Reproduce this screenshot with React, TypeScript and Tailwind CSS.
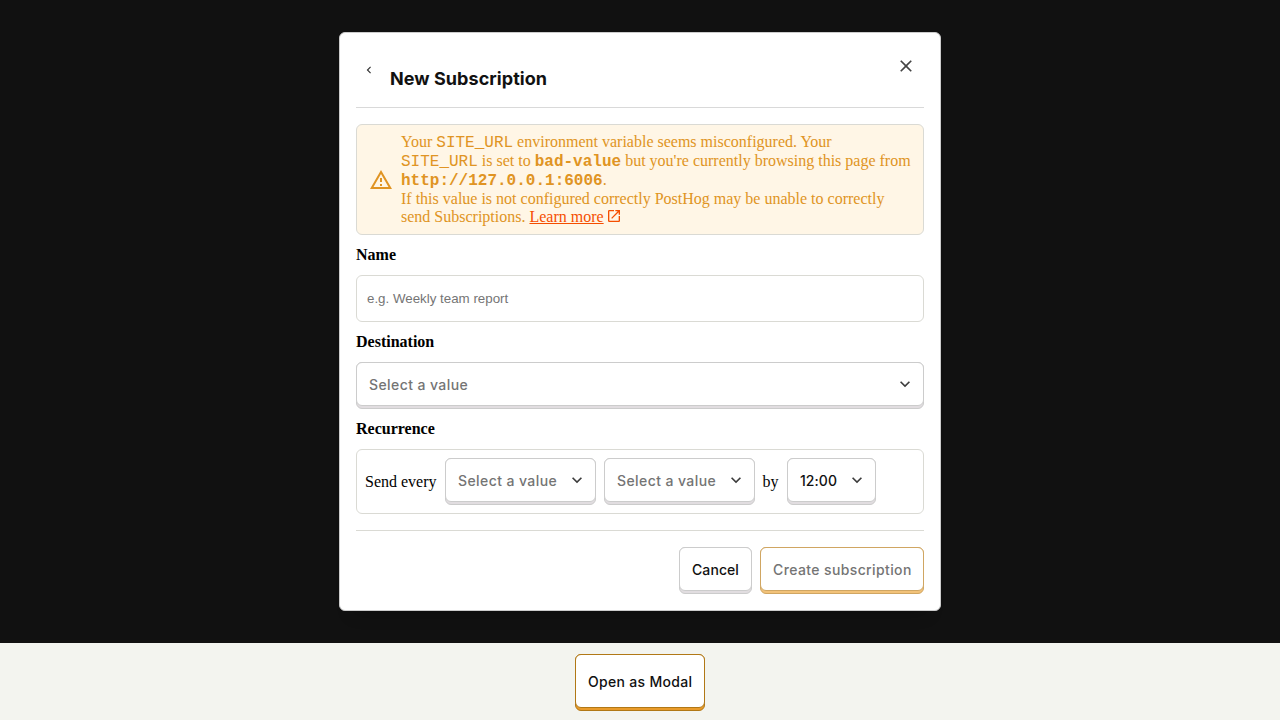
import type { ReactNode } from 'react'

const SERIF = "font-['Liberation_Serif',serif]"

interface LemonButtonProps {
  children: ReactNode
  className?: string
  frame?: string
  face?: string
  text?: string
  chevron?: boolean
}

function ChevronDown() {
  return (
    <svg viewBox="0 0 24 24" className="-mt-0.5 size-5 shrink-0 text-[#3c3c3c]" fill="currentColor">
      <path d="M7.41 8.59 12 13.17l4.59-4.58L18 10l-6 6-6-6z" />
    </svg>
  )
}

function LemonButton({
  children,
  className = 'h-[47px]',
  frame = 'border-[#cccccc] bg-[#e1dde0]',
  face = 'border-[#cccccc]',
  text = 'text-[#111]',
  chevron = false,
}: LemonButtonProps) {
  return (
    <button className={`flex rounded-md border pb-px ${frame} ${className}`}>
      <span
        className={`-mx-px -mt-px flex h-full flex-1 items-center justify-between rounded-md border bg-white pt-px pl-3 font-['Inter',sans-serif] text-sm font-medium whitespace-nowrap ${
          chevron ? 'pr-2' : 'pr-2.5'
        } ${face} ${text}`}
      >
        {children}
        {chevron && <ChevronDown />}
      </span>
    </button>
  )
}

function Field({ label, children }: { label: string; children: ReactNode }) {
  return (
    <div className="flex flex-col gap-2">
      <label className="h-6 text-base leading-6 font-bold">{label}</label>
      {children}
    </div>
  )
}

function Code({ children }: { children: ReactNode }) {
  return <code className="font-['Liberation_Mono',monospace] text-base leading-[normal]">{children}</code>
}

function Banner() {
  return (
    <div className="flex items-center rounded-md border border-[#dadad4] bg-[#fff6e6] py-2 pr-3 pl-3 text-[#e09423]">
      <svg viewBox="0 0 24 24" className="mr-2 size-6 shrink-0" fill="currentColor">
        <path d="M12 5.99 19.53 19H4.47L12 5.99M12 2 1 21h22L12 2zm1 14h-2v2h2v-2zm0-6h-2v4h2v-4z" />
      </svg>
      <div className="flex-1 text-base leading-[normal]">
        Your <Code>SITE_URL</Code> environment variable seems misconfigured. Your <Code>SITE_URL</Code> is set to{' '}
        <b><Code>bad-value</Code></b> but you're currently browsing this page from{' '}
        <b><Code>http://127.0.0.1:6006</Code></b>.
        <br />
        If this value is not configured correctly PostHog may be unable to correctly send Subscriptions.{' '}
        <a className="text-[#f54e00] underline">Learn more</a>
        <svg viewBox="0 0 24 24" className="ml-0.5 inline size-4 align-[-2px] text-[#f54e00]" fill="currentColor">
          <path d="M19 19H5V5h7V3H5a2 2 0 0 0-2 2v14a2 2 0 0 0 2 2h14c1.1 0 2-.9 2-2v-7h-2v7zM14 3v2h3.59l-9.83 9.83 1.41 1.41L19 6.41V10h2V3h-7z" />
        </svg>
      </div>
    </div>
  )
}

export default function App() {
  return (
    <div className={`flex h-[720px] w-[1280px] flex-col overflow-hidden bg-[#f3f4ef] text-base text-black ${SERIF}`}>
      <div className="flex h-[643px] items-start justify-center bg-[#111] pt-8">
        <section className="flex h-[579px] w-[602px] flex-col rounded-md border border-[#cccccc] bg-white px-4 shadow-[0_16px_16px_-16px_rgba(0,0,0,0.35)]">
          <header className="flex h-[75px] items-start border-b border-[#d9d9d9]">
            <svg viewBox="0 0 24 24" className="mt-[30px] ml-1.5 size-[14px] text-[#333]" fill="currentColor">
              <path d="M15.41 7.41 14 6l-6 6 6 6 1.41-1.41L10.83 12z" />
            </svg>
            <h3 className="mt-8 ml-[14px] font-['Inter',sans-serif] text-lg leading-7 font-bold tracking-[0.06px] text-[#111]">
              New Subscription
            </h3>
            <svg viewBox="0 0 24 24" className="mt-[23px] mr-2 ml-auto size-5 text-[#444]" fill="currentColor">
              <path d="M19 6.41 17.59 5 12 10.59 6.41 5 5 6.41 10.59 12 5 17.59 6.41 19 12 13.41 17.59 19 19 17.59 13.41 12z" />
            </svg>
          </header>

          <div className="flex flex-col gap-2 py-4">
            <Banner />
            <Field label="Name">
              <input
                placeholder="e.g. Weekly team report"
                className="h-[47px] rounded-md border border-[#dadad4] bg-white px-2.5 font-['Liberation_Sans',sans-serif] text-[13.333px] placeholder:text-[#757575]"
              />
            </Field>
            <Field label="Destination">
              <LemonButton chevron text="text-[#747474] tracking-[0.41px]">Select a value</LemonButton>
            </Field>
            <Field label="Recurrence">
              <div className="flex items-center gap-2 rounded-md border border-[#dadad4] p-2">
                <span className="w-[72px] whitespace-nowrap">Send every</span>
                <LemonButton chevron className="h-[47px] w-[151px]" text="text-[#747474] tracking-[0.41px]">Select a value</LemonButton>
                <LemonButton chevron className="h-[47px] w-[151px]" text="text-[#747474] tracking-[0.41px]">Select a value</LemonButton>
                <span className="-ml-[0.5px] w-[16.5px]">by</span>
                <LemonButton chevron className="h-[47px] w-[89px]" text="text-[#111] tracking-[0.05px]">12:00</LemonButton>
              </div>
            </Field>
          </div>

          <footer className="flex justify-end gap-2 border-t border-[#dadad4] pt-4">
            <LemonButton className="h-[47px] w-[73px]" text="text-[#111] tracking-[0.08px]">Cancel</LemonButton>
            <LemonButton
              className="h-[47px] w-[164px]"
              frame="border-[#d0a662] bg-[#f2c279]"
              face="border-[#d0a662]"
              text="text-[#747474] tracking-[0.38px]"
            >
              Create subscription
            </LemonButton>
          </footer>
        </section>
      </div>
      <div className="flex justify-center pt-[11px]">
        <LemonButton
          className="h-[57px] w-[130px]"
          frame="border-[#b17816] bg-[#e99b2a]"
          face="border-[#b17816]"
          text="text-[#111] tracking-[0.31px]"
        >
          Open as Modal
        </LemonButton>
      </div>
    </div>
  )
}
